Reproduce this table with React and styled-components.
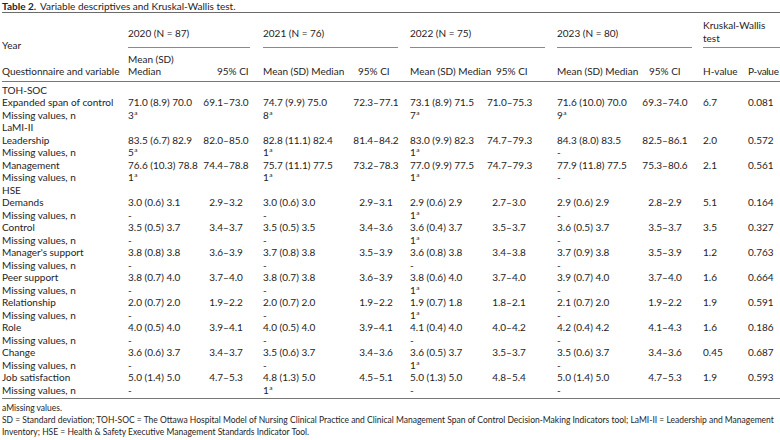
import React from 'react';
import styled, { createGlobalStyle } from 'styled-components';

const GlobalStyle = createGlobalStyle`
  html, body { margin: 0; padding: 0; background: #fff; }
  body { font-family: Lato, "Noto Sans", sans-serif; color: #262324; }
`;

const Page = styled.div`
  width: 780px;
  height: 440px;
  overflow: hidden;
  box-sizing: border-box;
  padding-left: 2px;
`;

const Caption = styled.div`
  font-size: 10px;
  line-height: 12px;
  white-space: nowrap;
`;

const CaptionLabel = styled.span`
  font-weight: 700;
  margin-right: 4px;
`;

const Table = styled.div`
  display: grid;
  grid-template-columns: 126px 70px 65px 89px 58px 77px 70px 83px 63px 45px 32px;
  grid-template-rows: 35px 33.5px 2px;
  grid-auto-rows: 12.5px;
  border-top: 1.5px solid #6b6b6b;
  font-size: 10px;
  white-space: nowrap;
`;

const HeadCell = styled.div`
  display: flex;
  flex-direction: column;
  justify-content: flex-end;
  box-sizing: border-box;
  line-height: ${(p) => p.$lh || 12}px;
  padding-bottom: ${(p) => p.$pb || 0}px;
  padding-left: ${(p) => p.$pl || 0}px;
  margin-right: ${(p) => p.$mr || 0}px;
  margin-bottom: ${(p) => p.$mb || 0}px;
  grid-column: ${(p) => (p.$span ? `span ${p.$span}` : 'auto')};
  border-bottom: ${(p) => (p.$rule ? '1px solid #8a8a8a' : 'none')};
`;

const SubHeadCell = styled.div`
  display: flex;
  flex-direction: column;
  justify-content: flex-end;
  box-sizing: border-box;
  line-height: 12px;
  padding-bottom: 4px;
  padding-left: ${(p) => p.$pl || 0}px;
  letter-spacing: ${(p) => p.$ls || 0}px;
  border-bottom: 1px solid #777;
`;

const Spacer = styled.div`
  grid-column: 1 / -1;
`;

const Cell = styled.div`
  line-height: 12.5px;
  text-align: ${(p) => p.$align || 'left'};
  padding-right: ${(p) => p.$pr || 0}px;
`;

const SectionCell = styled.div`
  grid-column: 1 / -1;
  line-height: 12.5px;
`;

const Sup = styled.sup`
  font-size: 6.5px;
  line-height: 0;
  vertical-align: 4px;
  margin-left: 0.5px;
`;

const Notes = styled.div`
  border-top: 1px solid #777;
  margin-top: 2px;
  padding-top: 3px;
  font-size: 8.5px;
  line-height: 12px;
  white-space: nowrap;
`;

const ciPad = [9, 10, 26, 13];

const rows = [
  { section: 'TOH-SOC' },
  { label: 'Expanded span of control', v: ['71.0 (8.9) 70.0', '69.1–73.0', '74.7 (9.9) 75.0', '72.3–77.1', '73.1 (8.9) 71.5', '71.0–75.3', '71.6 (10.0) 70.0', '69.3–74.0', '6.7', '0.081'] },
  { miss: ['3a', '8a', '7a', '9a'] },
  { section: 'LaMI-II' },
  { label: 'Leadership', v: ['83.5 (6.7) 82.9', '82.0–85.0', '82.8 (11.1) 82.4', '81.4–84.2', '83.0 (9.9) 82.3', '74.7–79.3', '84.3 (8.0) 83.5', '82.5–86.1', '2.0', '0.572'] },
  { miss: ['5a', '1a', '1a', '-'] },
  { label: 'Management', v: ['76.6 (10.3) 78.8', '74.4–78.8', '75.7 (11.1) 77.5', '73.2–78.3', '77.0 (9.9) 77.5', '74.7–79.3', '77.9 (11.8) 77.5', '75.3–80.6', '2.1', '0.561'] },
  { miss: ['1a', '1a', '1a', '-'] },
  { section: 'HSE' },
  { label: 'Demands', v: ['3.0 (0.6) 3.1', '2.9–3.2', '3.0 (0.6) 3.0', '2.9–3.1', '2.9 (0.6) 2.9', '2.7–3.0', '2.9 (0.6) 2.9', '2.8–2.9', '5.1', '0.164'] },
  { miss: ['-', '-', '1a', '-'] },
  { label: 'Control', v: ['3.5 (0.5) 3.7', '3.4–3.7', '3.5 (0.5) 3.5', '3.4–3.6', '3.6 (0.4) 3.7', '3.5–3.7', '3.6 (0.5) 3.7', '3.5–3.7', '3.5', '0.327'] },
  { miss: ['-', '-', '1a', '-'] },
  { label: "Manager's support", v: ['3.8 (0.8) 3.8', '3.6–3.9', '3.7 (0.8) 3.8', '3.5–3.9', '3.6 (0.8) 3.8', '3.4–3.8', '3.7 (0.9) 3.8', '3.5–3.9', '1.2', '0.763'] },
  { miss: ['-', '-', '-', '-'] },
  { label: 'Peer support', v: ['3.8 (0.7) 4.0', '3.7–4.0', '3.8 (0.7) 3.8', '3.6–3.9', '3.8 (0.6) 4.0', '3.7–4.0', '3.9 (0.7) 4.0', '3.7–4.0', '1.6', '0.664'] },
  { miss: ['-', '-', '1a', '-'] },
  { label: 'Relationship', v: ['2.0 (0.7) 2.0', '1.9–2.2', '2.0 (0.7) 2.0', '1.9–2.2', '1.9 (0.7) 1.8', '1.8–2.1', '2.1 (0.7) 2.0', '1.9–2.2', '1.9', '0.591'] },
  { miss: ['-', '-', '1a', '-'] },
  { label: 'Role', v: ['4.0 (0.5) 4.0', '3.9–4.1', '4.0 (0.5) 4.0', '3.9–4.1', '4.1 (0.4) 4.0', '4.0–4.2', '4.2 (0.4) 4.2', '4.1–4.3', '1.6', '0.186'] },
  { miss: ['-', '-', '-', '-'] },
  { label: 'Change', v: ['3.6 (0.6) 3.7', '3.4–3.7', '3.5 (0.6) 3.7', '3.4–3.6', '3.6 (0.5) 3.7', '3.5–3.7', '3.5 (0.6) 3.7', '3.4–3.6', '0.45', '0.687'] },
  { miss: ['-', '-', '1a', '-'] },
  { label: 'Job satisfaction', v: ['5.0 (1.4) 5.0', '4.7–5.3', '4.8 (1.3) 5.0', '4.5–5.1', '5.0 (1.3) 5.0', '4.8–5.4', '5.0 (1.4) 5.0', '4.7–5.3', '1.9', '0.593'] },
  { miss: ['-', '1a', '-', '-'] },
];

const Missing = ({ value }) =>
  value.endsWith('a') ? (
    <>
      {value.slice(0, -1)}
      <Sup>a</Sup>
    </>
  ) : (
    value
  );

function renderRow(r, i) {
  if (r.section) return <SectionCell key={i}>{r.section}</SectionCell>;
  if (r.miss) {
    const cells = [<Cell key="l">Missing values, n</Cell>];
    r.miss.forEach((m, j) => {
      cells.push(
        <Cell key={`m${j}`}>
          <Missing value={m} />
        </Cell>
      );
      cells.push(<Cell key={`e${j}`} />);
    });
    cells.push(<Cell key="h" />, <Cell key="p" />);
    return <React.Fragment key={i}>{cells}</React.Fragment>;
  }
  return (
    <React.Fragment key={i}>
      <Cell>{r.label}</Cell>
      {r.v.map((val, j) => {
        const isCi = j < 8 && j % 2 === 1;
        return (
          <Cell key={j} $align={isCi ? 'center' : 'left'} $pr={isCi ? ciPad[(j - 1) / 2] : 0}>
            {val}
          </Cell>
        );
      })}
    </React.Fragment>
  );
}

export default function App() {
  return (
    <>
      <GlobalStyle />
      <Page>
        <Caption>
          <CaptionLabel>Table 2.</CaptionLabel>Variable descriptives and Kruskal-Wallis test.
        </Caption>
        <Table>
          <HeadCell $mb={-3}>Year</HeadCell>
          <HeadCell $span={2} $rule $mr={13} $pb={8}>2020 (N = 87)</HeadCell>
          <HeadCell $span={2} $rule $mr={12} $pb={8}>2021 (N = 76)</HeadCell>
          <HeadCell $span={2} $rule $mr={12} $pb={8}>2022 (N = 75)</HeadCell>
          <HeadCell $span={2} $rule $mr={11} $pb={8}>2023 (N = 80)</HeadCell>
          <HeadCell $span={2} $rule $lh={13} $pb={2}>
            <span>Kruskal-Wallis</span>
            <span>test</span>
          </HeadCell>

          <SubHeadCell>Questionnaire and variable</SubHeadCell>
          <SubHeadCell>
            <span>Mean (SD)</span>
            <span>Median</span>
          </SubHeadCell>
          <SubHeadCell $pl={19}>95% CI</SubHeadCell>
          <SubHeadCell>Mean (SD) Median</SubHeadCell>
          <SubHeadCell $pl={6}>95% CI</SubHeadCell>
          <SubHeadCell>Mean (SD) Median</SubHeadCell>
          <SubHeadCell $pl={9}>95% CI</SubHeadCell>
          <SubHeadCell>Mean (SD) Median</SubHeadCell>
          <SubHeadCell $pl={9}>95% CI</SubHeadCell>
          <SubHeadCell>H-value</SubHeadCell>
          <SubHeadCell $ls={-0.3}>P-value</SubHeadCell>

          <Spacer />
          {rows.map(renderRow)}
        </Table>
        <Notes>
          <div>aMissing values.</div>
          <div>
            SD = Standard deviation; TOH-SOC = The Ottawa Hospital Model of Nursing Clinical Practice and Clinical Management Span of Control Decision-Making Indicators tool; LaMI-II = Leadership and Management
          </div>
          <div>Inventory; HSE = Health &amp; Safety Executive Management Standards Indicator Tool.</div>
        </Notes>
      </Page>
    </>
  );
}
